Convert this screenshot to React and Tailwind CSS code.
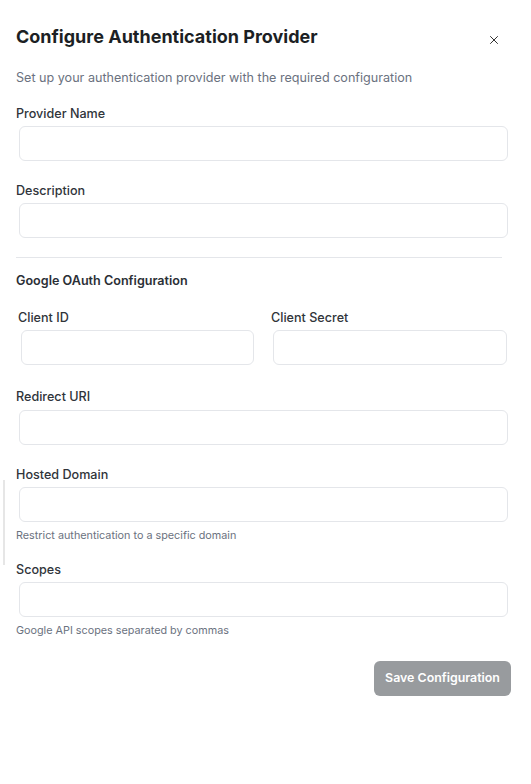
import React from 'react';
import { X } from 'lucide-react';

const font = { fontFamily: 'Inter, "Noto Sans", sans-serif' };

const Field = ({ label, help, labelClass = 'mt-4', inputClass = 'mt-[2px]' }) => (
    <div>
        <label className={`block pt-px text-[12.6px] leading-5 font-medium text-[#30343a] ${labelClass}`}>{label}</label>
        <input
            type="text"
            className={`block h-[35px] rounded-md border border-[#e4e6ea] bg-white outline-none ${inputClass}`}
        />
        {help && <p className="mt-[6px] text-[10.8px] leading-4 text-[#6b7280]">{help}</p>}
    </div>
);

const App = () => {
    return (
        <div className="relative h-[784px] w-full bg-white" style={font}>
            {/* scroll hint at the left edge */}
            <div className="absolute left-[3px] top-[480px] h-[85px] w-[2px] bg-[#e6e6e6]" />

            <button className="absolute right-[30px] top-[33px] text-[#222] hover:text-black">
                <X className="h-[14px] w-[14px]" strokeWidth={1.6} />
            </button>

            <div className="px-4 pt-[23px]">
                <h2 className="text-lg leading-7 font-bold text-[#1c1f24]">Configure Authentication Provider</h2>
                <p className="mt-[17px] text-[12.6px] leading-5 text-[#6b7280]">
                    Set up your authentication provider with the required configuration
                </p>

                <Field label="Provider Name" labelClass="mt-[15px]" inputClass="mt-[2px] ml-[3px] w-[489px]" />
                <Field label="Description" labelClass="mt-[19px]" inputClass="mt-[2px] ml-[3px] w-[489px]" />

                <div className="mt-[19px] h-px w-[486px] bg-[#e4e6ea]" />

                <h3 className="mt-3 pt-px text-[12.6px] leading-5 font-semibold text-[#2b2f36]">Google OAuth Configuration</h3>

                <div className="flex">
                    <div className="ml-[2px] w-[253px]">
                        <Field label="Client ID" labelClass="mt-[16px]" inputClass="mt-[2px] ml-[3px] w-[233px]" />
                    </div>
                    <div>
                        <Field label="Client Secret" labelClass="mt-[16px]" inputClass="mt-[2px] ml-[2px] w-[234px]" />
                    </div>
                </div>

                <Field label="Redirect URI" labelClass="mt-[21px]" inputClass="mt-[3px] ml-[3px] w-[489px]" />
                <Field
                    label="Hosted Domain"
                    labelClass="mt-[19px]"
                    inputClass="mt-[2px] ml-[3px] w-[489px]"
                    help="Restrict authentication to a specific domain"
                />
                <Field
                    label="Scopes"
                    labelClass="mt-[15px]"
                    inputClass="mt-[2px] ml-[3px] w-[489px]"
                    help="Google API scopes separated by commas"
                />

                <div className="mt-[22px] flex w-[495px] justify-end">
                    <button className="h-[35px] w-[137px] rounded-md bg-[#989b9e] text-[12.4px] font-semibold text-white">
                        Save Configuration
                    </button>
                </div>
            </div>
        </div>
    );
};

export default App;
